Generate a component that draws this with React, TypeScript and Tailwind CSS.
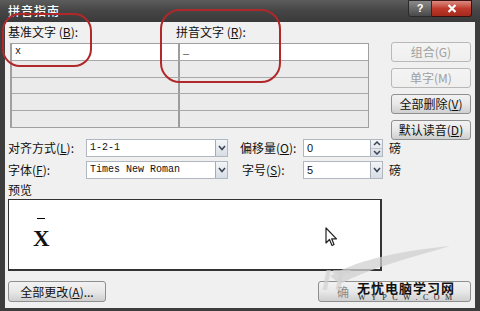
import React from "react";

const cjk = { fontFamily: '"Noto Sans CJK SC", "Noto Sans", sans-serif' };
const mono = { fontFamily: '"Liberation Mono", "Noto Sans CJK SC", monospace' };

function U({ c }: { c: string }) {
  return <span className="underline">{c}</span>;
}

function Btn({ children, disabled, className = "" }: { children: React.ReactNode; disabled?: boolean; className?: string }) {
  return (
    <div
      className={`h-[20px] flex items-center justify-center rounded-[3px] border text-[12px] bg-gradient-to-b ${disabled ? "text-[#a0a0a0] border-[#b8b8b8] from-[#f4f4f4] to-[#efefef]" : "text-[#111] border-[#8e8f8f] from-[#f2f2f2] via-[#e8e8e8] to-[#cfcfcf]"} ${className}`}
      style={cjk}
    >
      {children}
    </div>
  );
}

function Arrow() {
  return (
    <div className="w-[12px] h-full border-l border-[#a5acb5] flex items-center justify-center bg-gradient-to-b from-[#f4f6f8] to-[#d7dde4]">
      <svg width="8" height="6" viewBox="0 0 8 6">
        <path d="M1 1 L4 4.5 L7 1" stroke="#3a4656" strokeWidth="1.6" fill="none" />
      </svg>
    </div>
  );
}

function Spin() {
  return (
    <div className="w-[12px] h-full border-l border-[#a5acb5] flex flex-col bg-gradient-to-b from-[#f4f6f8] to-[#d7dde4]">
      <div className="flex-1 flex items-center justify-center">
        <svg width="8" height="5" viewBox="0 0 8 5"><path d="M1 4 L4 1 L7 4" stroke="#3a4656" strokeWidth="1.5" fill="none" /></svg>
      </div>
      <div className="flex-1 flex items-center justify-center border-t border-[#c0c6cc]">
        <svg width="8" height="5" viewBox="0 0 8 5"><path d="M1 1 L4 4 L7 1" stroke="#3a4656" strokeWidth="1.5" fill="none" /></svg>
      </div>
    </div>
  );
}

export default function App() {
  const rows = [0, 1, 2, 3, 4];
  return (
    <div className="relative w-[480px] h-[311px] overflow-hidden bg-[#3d3d3d] flex flex-col">
      {/* title bar */}
      <div className="h-[22px] flex items-center bg-gradient-to-b from-[#5c5c5c] via-[#454545] to-[#3a3a3a]">
        <span className="ml-[8px] text-white text-[12px] font-medium tracking-[1px]" style={cjk}>拼音指南</span>
        <div className="ml-auto mr-[8px] self-start flex">
          <div className="w-[24px] h-[17px] rounded-bl-[3px] border border-[#2a2a2a] bg-gradient-to-b from-[#8a8a8a] to-[#4a4a4a] flex items-center justify-center text-white text-[11px] font-bold" style={{ fontFamily: '"Liberation Sans", sans-serif' }}>?</div>
          <div className="w-[40px] h-[17px] rounded-br-[3px] border border-l-0 border-[#3a1010] bg-gradient-to-b from-[#d98a80] via-[#c0392b] to-[#a32a1c] flex items-center justify-center">
            <svg width="10" height="9" viewBox="0 0 10 9"><path d="M1.5 1 L8.5 8 M8.5 1 L1.5 8" stroke="white" strokeWidth="2.2" /></svg>
          </div>
        </div>
      </div>

      {/* body */}
      <div className="flex-1 mx-[5px] mb-[3px] bg-[#f0f0f0] pl-[3px] pr-[4px] flex flex-col text-[12px] text-[#111]" style={cjk}>
        <div className="flex items-start">
          <div className="ml-[2px] w-[359px] flex flex-col">
            <div className="h-[21px] flex items-center pb-[1px]">
              <span className="w-[168px] -ml-[2px]">基准文字 (<U c="B" />):</span>
              <span>拼音文字 (<U c="R" />):</span>
            </div>
            <div className="h-[85px] border-l-2 border-t border-[#a0a0a0] border-r border-b bg-[#ececec] flex flex-col">
              {rows.map((r) => (
                <div key={r} className={`flex-1 flex border-b border-[#a8a8a8] last:border-b-0 ${r === 0 ? "bg-white" : "bg-[#ebebeb]"}`}>
                  <div className="w-[168px] border-r-2 border-[#9c9c9c] flex items-center pl-[3px] text-[10px]" style={mono}>{r === 0 ? "x" : ""}</div>
                  <div className="flex-1 flex items-center pl-[3px] text-[10px]" style={mono}>{r === 0 ? "_" : ""}</div>
                </div>
              ))}
            </div>
          </div>
          <div className="ml-auto mt-[20px] -mb-[12px] w-[80px] flex flex-col gap-[6px]">
            <Btn disabled>组合(G)</Btn>
            <Btn disabled>单字(M)</Btn>
            <Btn>全部删除(<U c="V" />)</Btn>
            <Btn>默认读音(<U c="D" />)</Btn>
          </div>
        </div>

        {/* form rows */}
        <div className="mt-[11px] flex items-center h-[18px]">
          <span className="w-[78px]">对齐方式(<U c="L" />):</span>
          <div className="w-[142px] h-[18px] bg-white border border-[#b0b7c0] flex">
            <span className="flex-1 pl-[3px] text-[10px] leading-[16px]" style={mono}>1-2-1</span>
            <Arrow />
          </div>
          <span className="ml-[12px] w-[63px]">偏移量(<U c="O" />):</span>
          <div className="w-[80px] h-[18px] bg-white border border-[#b0b7c0] flex">
            <span className="flex-1 pl-[3px] text-[11px] leading-[16px]" style={{ fontFamily: '"Liberation Sans", sans-serif' }}>0</span>
            <Spin />
          </div>
          <span className="ml-[6px]">磅</span>
        </div>
        <div className="mt-[4px] flex items-center h-[18px]">
          <span className="w-[78px]">字体(<U c="F" />):</span>
          <div className="w-[142px] h-[18px] bg-white border border-[#b0b7c0] flex">
            <span className="flex-1 pl-[3px] text-[10px] leading-[16px]" style={mono}>Times New Roman</span>
            <Arrow />
          </div>
          <span className="ml-[14px] w-[61px]">字号(<U c="S" />):</span>
          <div className="w-[80px] h-[18px] bg-white border border-[#b0b7c0] flex">
            <span className="flex-1 pl-[3px] text-[11px] leading-[16px]" style={{ fontFamily: '"Liberation Sans", sans-serif' }}>5</span>
            <Arrow />
          </div>
          <span className="ml-[6px]">磅</span>
        </div>
        <div className="mt-[3px] h-[16px] leading-[16px]">预览</div>
        <div className="mt-[1px] w-[374px] h-[72px] bg-white border border-[#333] border-r-2 border-b-2 relative">
          <div className="absolute left-[24px] top-[18px] flex flex-col items-center" style={{ fontFamily: '"Liberation Serif", serif' }}>
            <div className="w-[8px] h-[1px] bg-black" />
            <span className="mt-[11px] text-[23px] leading-[18px] font-semibold">X</span>
          </div>
          <svg className="absolute left-[316px] top-[27px]" width="13" height="21" viewBox="0 0 13 21">
            <path d="M1 1 L1 16 L4.5 12.5 L7 18.5 L9 17.5 L6.7 11.8 L11.5 11.8 Z" fill="white" stroke="#222" strokeWidth="1.2" strokeLinejoin="round" />
          </svg>
        </div>
        <div className="mt-[10px] flex">
          <Btn className="w-[98px] h-[21px]">全部更改(<U c="A" />)...</Btn>
          <Btn className="ml-auto w-[153px] h-[21px] justify-start pl-[18px] text-[#888]">确</Btn>
        </div>
      </div>

      {/* watermark */}
      <svg className="absolute left-[300px] top-[236px] pointer-events-none" width="160" height="60" viewBox="0 0 160 60">
        <path d="M30 40 C 60 22, 110 14, 150 10 C 110 22, 70 32, 40 48 Z" fill="#d0d0d0" opacity="0.75" />
        <text x="22" y="54" fontSize="30" fontStyle="italic" fontWeight="bold" fill="#d2d2d2" opacity="0.7" fontFamily="Liberation Sans">IT</text>
      </svg>
      <div className="absolute left-[357px] top-[281px] text-[13px] leading-[13px] font-bold text-[#111] tracking-[1px] pointer-events-none" style={{ fontFamily: '"Noto Sans CJK SC", serif' }}>无忧电脑学习网</div>
      <div className="absolute left-[358px] top-[294px] text-[8px] leading-[8px] text-[#222] tracking-[5.5px] pointer-events-none" style={{ fontFamily: '"Liberation Serif", serif' }}>WYPCW.COM</div>

      {/* red annotation rings */}
      <div className="absolute left-[2px] top-[13px] w-[90px] h-[54px] border-2 border-[#b0282a] rounded-[18px] pointer-events-none" />
      <div className="absolute left-[160px] top-[9px] w-[121px] h-[74px] border-2 border-[#b0282a] rounded-[20px] pointer-events-none" />
    </div>
  );
}
